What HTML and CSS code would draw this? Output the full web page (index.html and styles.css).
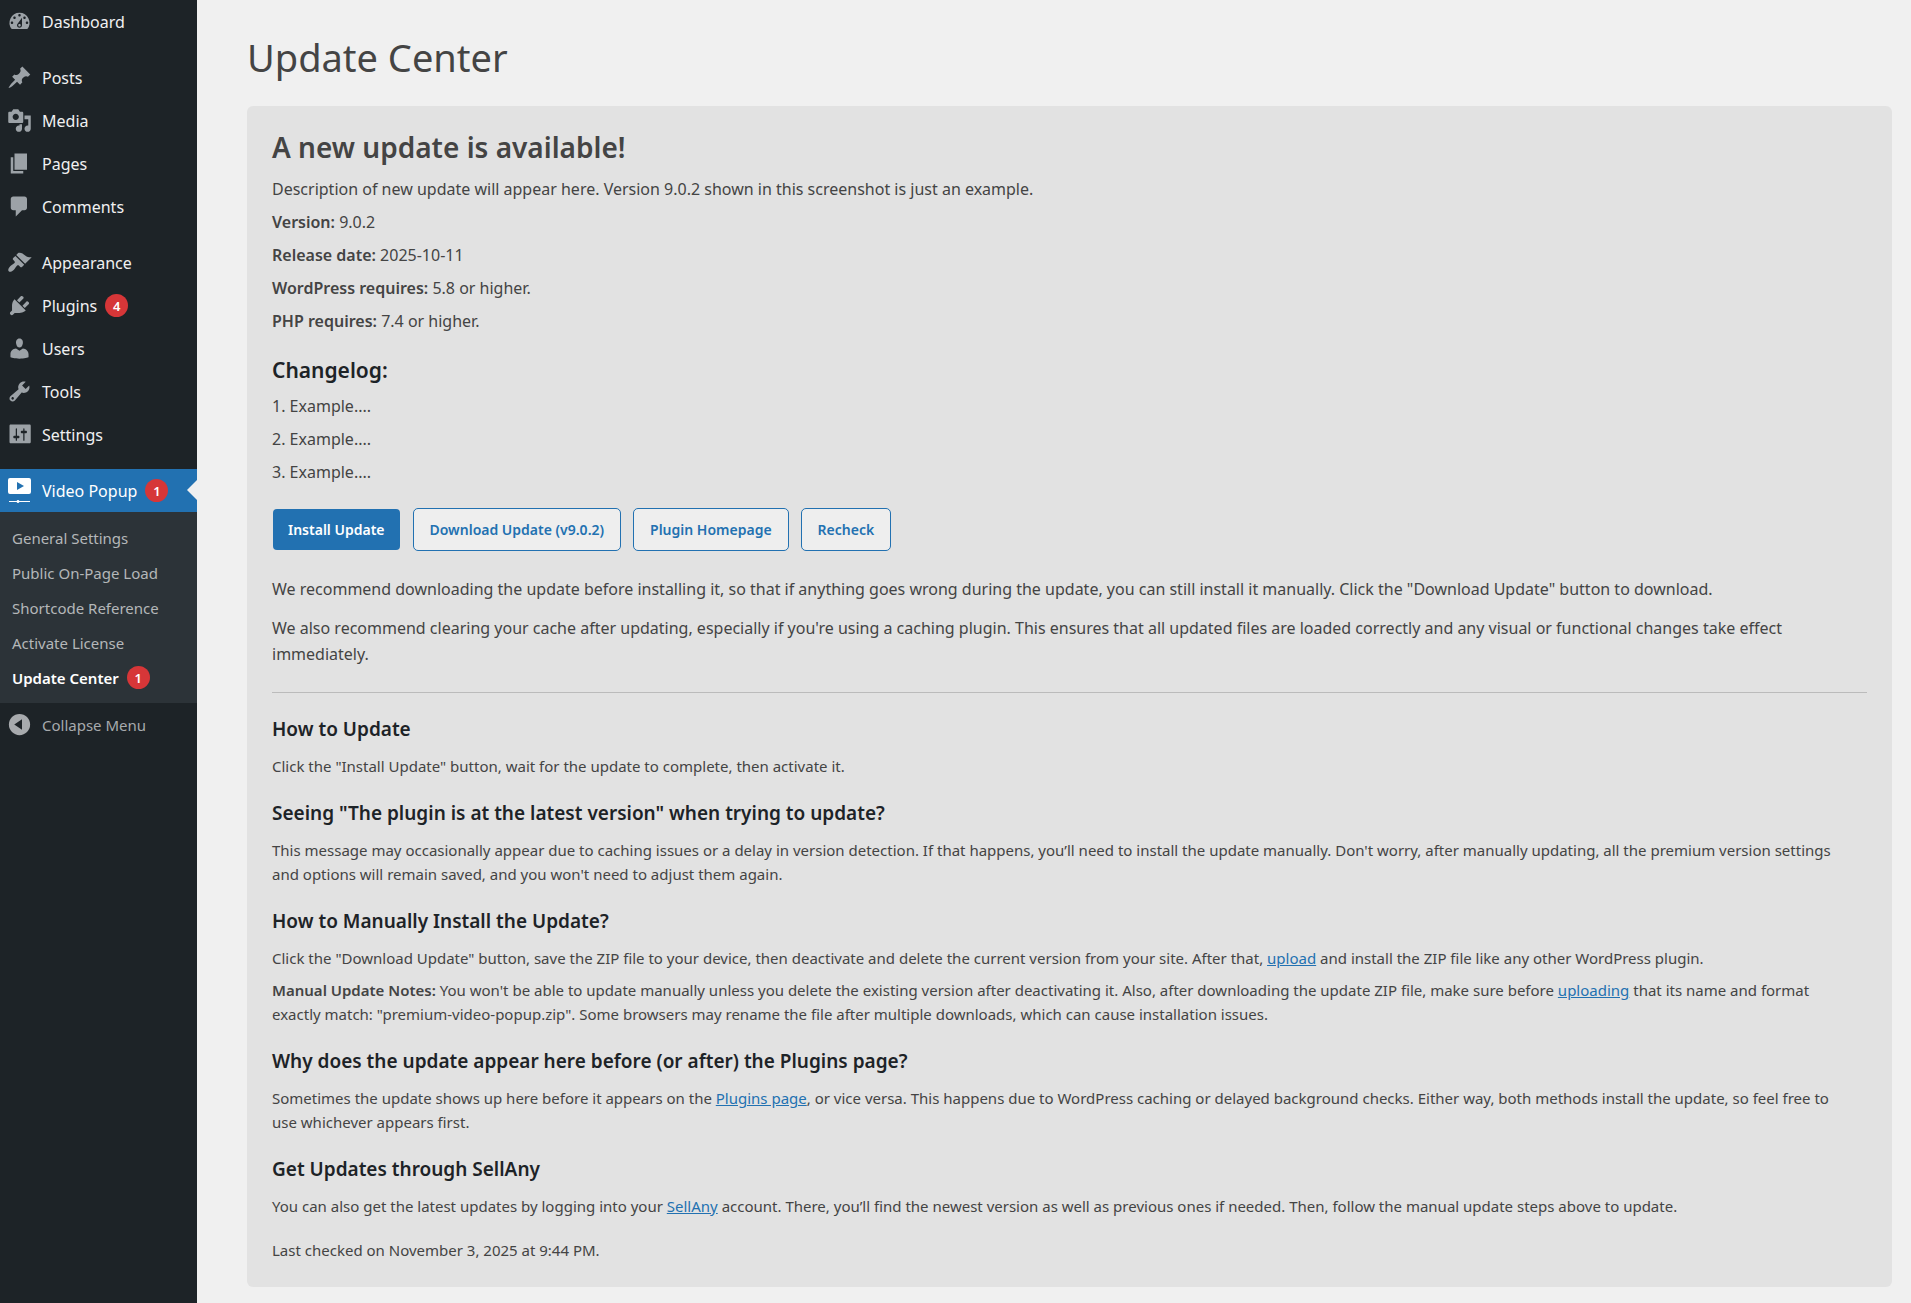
FILE: index.html
```
<!DOCTYPE html>
<html lang="en">
<head>
  <meta charset="UTF-8">
  <meta name="viewport" content="width=device-width, initial-scale=1.0">
  <title>Update Center</title>
  <link rel="stylesheet" href="styles.css">
</head>
<body>
  <div class="layout">
    <nav class="sidebar" aria-label="Main menu">
      <ul class="menu">
        <li>
          <a class="menu-link" href="#">
            <svg class="icon" viewBox="0 0 20 20"><path d="M3.76 16h12.48A7.998 7.998 0 0 0 10 3a7.998 7.998 0 0 0-6.24 13zM10 4c.55 0 1 .45 1 1s-.45 1-1 1-1-.45-1-1 .45-1 1-1zM6 6c.55 0 1 .45 1 1s-.45 1-1 1-1-.45-1-1 .45-1 1-1zm8 0c.55 0 1 .45 1 1s-.45 1-1 1-1-.45-1-1 .45-1 1-1zm-5.370 5.550L12 7v6c0 1.100-.9 2-2 2s-2-.9-2-2c0-.57.24-1.080.63-1.450zM4 10c.55 0 1 .45 1 1s-.45 1-1 1-1-.45-1-1 .45-1 1-1zm12 0c.55 0 1 .45 1 1s-.45 1-1 1-1-.45-1-1 .45-1 1-1zm-5 3c0-.55-.45-1-1-1s-1 .45-1 1 .45 1 1 1 1-.45 1-1z"/></svg>
            Dashboard
          </a>
        </li>
        <li class="group-start">
          <a class="menu-link" href="#">
            <svg class="icon" viewBox="0 0 20 20"><path d="M10.44 3.02l1.82-1.82 6.36 6.35-1.83 1.82c-1.05-.68-2.48-.57-3.41.36l-.75.75c-.92.93-1.04 2.35-.35 3.41l-1.83 1.82-2.41-2.41-2.8 2.79c-.42.42-3.38 2.71-3.8 2.29s1.86-3.39 2.28-3.81l2.79-2.79L4.1 9.36l1.83-1.82c1.05.69 2.48.57 3.4-.36l.75-.75c.93-.92 1.05-2.35.36-3.41z"/></svg>
            Posts
          </a>
        </li>
        <li>
          <a class="menu-link" href="#">
            <svg class="icon" viewBox="0 0 20 20"><path d="M13 11V4c0-.55-.45-1-1-1h-1.67L9 1H5L3.67 3H2c-.55 0-1 .45-1 1v7c0 .55.45 1 1 1h10c.55 0 1-.45 1-1zM7 4.5c1.38 0 2.5 1.12 2.5 2.5S8.38 9.5 7 9.5 4.5 8.38 4.5 7 5.62 4.5 7 4.5zM14 6h5v10.5c0 1.38-1.12 2.5-2.5 2.5S14 17.88 14 16.5s1.12-2.5 2.5-2.5c.17 0 .34.02.5.05V9h-3V6zm-4 8.05V13h2v3.5c0 1.38-1.12 2.5-2.5 2.5S7 17.88 7 16.5 8.12 14 9.5 14c.17 0 .34.02.5.05z"/></svg>
            Media
          </a>
        </li>
        <li>
          <a class="menu-link" href="#">
            <svg class="icon" viewBox="0 0 20 20"><path d="M6 15V2h10v13H6zm-1 1h8v2H3V5h2v11z"/></svg>
            Pages
          </a>
        </li>
        <li>
          <a class="menu-link" href="#">
            <svg class="icon" viewBox="0 0 20 20"><path d="M5 2h9c1.1 0 2 .9 2 2v7c0 1.1-.9 2-2 2h-2l-5 5v-5H5c-1.1 0-2-.9-2-2V4c0-1.1.9-2 2-2z"/></svg>
            Comments
          </a>
        </li>
        <li class="group-start">
          <a class="menu-link" href="#">
            <svg class="icon" viewBox="0 0 20 20"><path d="M14.48 11.06L7.41 3.99l1.5-1.5c.5-.56 2.3-.47 3.51.32 1.21.8 1.43 1.28 2.91 2.1 1.18.64 2.45 1.26 4.45.85zm-.71.71L6.7 4.7 4.93 6.47c-.39.39-.39 1.02 0 1.41l1.06 1.06c.39.39.39 1.03 0 1.42-.6.6-1.43 1.11-2.21 1.69-.35.26-.7.53-1.01.84C1.43 14.23.4 16.08 1.4 17.07c.99 1 2.84-.03 4.18-1.36.31-.31.58-.66.85-1.02.57-.78 1.08-1.61 1.69-2.21.39-.39 1.02-.39 1.41 0l1.06 1.06c.39.39 1.02.39 1.41 0z"/></svg>
            Appearance
          </a>
        </li>
        <li>
          <a class="menu-link" href="#">
            <svg class="icon" viewBox="0 0 20 20"><path d="M13.11 4.36L9.87 7.6 8 5.73l3.24-3.24c.35-.34 1.05-.2 1.56.32.52.51.66 1.21.31 1.55zm-8 1.77l.91-1.12 9.01 9.01-1.19.84c-.71.71-2.63 1.16-3.82 1.16H6.14L4.9 17.26c-.59.59-1.54.59-2.12 0-.59-.58-.59-1.53 0-2.12l1.24-1.24v-3.88c0-1.13.4-3.19 1.09-3.89zm7.26 3.97l3.24-3.24c.34-.35 1.04-.21 1.55.31.52.51.66 1.21.31 1.55l-3.24 3.25z"/></svg>
            Plugins
            <span class="badge">4</span>
          </a>
        </li>
        <li>
          <a class="menu-link" href="#">
            <svg class="icon" viewBox="0 0 20 20"><path d="M10 9.25c-2.27 0-2.73-3.44-2.73-3.44C7 4.02 7.82 2 9.97 2c2.16 0 2.98 2.02 2.71 3.81 0 0-.41 3.44-2.68 3.44zm0 2.57L12.72 10c2.39 0 4.52 2.33 4.52 4.53v2.49s-3.65 1.13-7.24 1.13c-3.65 0-7.24-1.13-7.24-1.13v-2.49c0-2.25 1.94-4.48 4.47-4.48z"/></svg>
            Users
          </a>
        </li>
        <li>
          <a class="menu-link" href="#">
            <svg class="icon" viewBox="0 0 20 20"><path d="M16.68 9.77c-1.34 1.34-3.3 1.67-4.95.99l-5.41 6.52c-.99.99-2.59.99-3.58 0s-.99-2.59 0-3.57l6.52-5.42c-.68-1.65-.35-3.61.99-4.95 1.28-1.28 3.12-1.62 4.72-1.06l-2.89 2.89 2.82 2.82 2.86-2.87c.53 1.58.18 3.39-1.08 4.65zM3.81 16.21c.4.39 1.04.39 1.43 0 .4-.4.4-1.04 0-1.43-.39-.4-1.03-.4-1.43 0-.39.39-.39 1.03 0 1.43z"/></svg>
            Tools
          </a>
        </li>
        <li>
          <a class="menu-link" href="#">
            <svg class="icon" viewBox="0 0 20 20"><path fill-rule="evenodd" d="M3 2h15c.55 0 1 .45 1 1v13c0 .55-.45 1-1 1H3c-.55 0-1-.45-1-1V3c0-.55.45-1 1-1zM8 11h1c.55 0 1 .45 1 1s-.45 1-1 1H8v1.500c0 .28-.22.5-.5.5s-.5-.22-.5-.5V13H6c-.55 0-1-.45-1-1s.45-1 1-1h1V5.500c0-.28.22-.5.5-.5s.5.22.5.5V11zm5-2h-1c-.55 0-1-.45-1-1s.45-1 1-1h1V5.500c0-.28.22-.5.5-.5s.5.22.5.5V7h1c.55 0 1 .45 1 1s-.45 1-1 1h-1v5.500c0 .28-.22.5-.5.5s-.5-.22-.5-.5V9z"/></svg>
            Settings
          </a>
        </li>
        <li class="group-start">
          <a class="menu-link current" href="#">
            <svg class="icon" viewBox="0 0 25 25"><path fill-rule="evenodd" d="M3 0h19a2 2 0 0 1 2 2v12a2 2 0 0 1-2 2H3a2 2 0 0 1-2-2V2a2 2 0 0 1 2-2zM10 4v8l7-4z"/><path d="M2 23h7.600a1.500 1.500 0 0 1 2.800 0H23v1H12.400a1.500 1.500 0 0 1-2.800 0H2z"/></svg>
            Video Popup
            <span class="badge">1</span>
          </a>
          <ul class="submenu">
            <li><a href="#">General Settings</a></li>
            <li><a href="#">Public On-Page Load</a></li>
            <li><a href="#">Shortcode Reference</a></li>
            <li><a href="#">Activate License</a></li>
            <li><a class="current-page" href="#">Update Center <span class="badge">1</span></a></li>
          </ul>
        </li>
        <li>
          <button class="menu-link collapse" type="button">
            <svg class="icon" viewBox="0 0 20 20"><path fill-rule="evenodd" d="M10 1.500a8.500 8.500 0 1 1 0 17 8.500 8.500 0 0 1 0-17zM12 5.800L5.800 10l6.200 4.200z"/></svg>
            Collapse Menu
          </button>
        </li>
      </ul>
    </nav>

    <main class="content">
      <h1 class="page-title">Update Center</h1>

      <div class="card">
        <section class="update">
          <h2 class="update-title">A new update is available!</h2>
          <p>Description of new update will appear here. Version 9.0.2 shown in this screenshot is just an example.</p>
          <p><strong>Version:</strong> 9.0.2</p>
          <p><strong>Release date:</strong> 2025-10-11</p>
          <p><strong>WordPress requires:</strong> 5.8 or higher.</p>
          <p><strong>PHP requires:</strong> 7.4 or higher.</p>

          <h3 class="changelog-title">Changelog:</h3>
          <p>1. Example....</p>
          <p>2. Example....</p>
          <p>3. Example....</p>
        </section>

        <div class="actions">
          <button class="btn btn-primary" type="button">Install Update</button>
          <button class="btn" type="button">Download Update (v9.0.2)</button>
          <button class="btn" type="button">Plugin Homepage</button>
          <button class="btn" type="button">Recheck</button>
        </div>

        <section class="notes">
          <p>We recommend downloading the update before installing it, so that if anything goes wrong during the update, you can still install it manually. Click the "Download Update" button to download.</p>
          <p>We also recommend clearing your cache after updating, especially if you're using a caching plugin. This ensures that all updated files are loaded correctly and any visual or functional changes take effect immediately.</p>
        </section>

        <hr class="divider">

        <section class="help">
          <h3>How to Update</h3>
          <p>Click the "Install Update" button, wait for the update to complete, then activate it.</p>

          <h3>Seeing "The plugin is at the latest version" when trying to update?</h3>
          <p>This message may occasionally appear due to caching issues or a delay in version detection. If that happens, you’ll need to install the update manually. Don't worry, after manually updating, all the premium version settings and options will remain saved, and you won't need to adjust them again.</p>

          <h3>How to Manually Install the Update?</h3>
          <p>Click the "Download Update" button, save the ZIP file to your device, then deactivate and delete the current version from your site. After that, <a href="#">upload</a> and install the ZIP file like any other WordPress plugin.</p>
          <p><strong>Manual Update Notes:</strong> You won't be able to update manually unless you delete the existing version after deactivating it. Also, after downloading the update ZIP file, make sure before <a href="#">uploading</a> that its name and format exactly match: "premium-video-popup.zip". Some browsers may rename the file after multiple downloads, which can cause installation issues.</p>

          <h3>Why does the update appear here before (or after) the Plugins page?</h3>
          <p>Sometimes the update shows up here before it appears on the <a href="#">Plugins page</a>, or vice versa. This happens due to WordPress caching or delayed background checks. Either way, both methods install the update, so feel free to use whichever appears first.</p>

          <h3>Get Updates through SellAny</h3>
          <p>You can also get the latest updates by logging into your <a href="#">SellAny</a> account. There, you’ll find the newest version as well as previous ones if needed. Then, follow the manual update steps above to update.</p>
          <p class="last-checked">Last checked on November 3, 2025 at 9:44 PM.</p>
        </section>
      </div>
    </main>
  </div>
</body>
</html>
```

FILE: styles.css
```
* {
  box-sizing: border-box;
}
body {
  margin: 0;
  background-color: #f0f0f0;
  color: #444444;
  font-family: "Segoe UI", "Noto Sans", "Open Sans", sans-serif;
  font-size: 16px;
  line-height: 26px;
}
h1, h2, h3, p, ul {
  margin: 0;
}
ul {
  padding: 0;
  list-style: none;
}
strong {
  font-weight: 600;
}
.layout {
  display: flex;
  min-height: 100vh;
}

/* Sidebar */
.sidebar {
  flex: 0 0 197px;
  background-color: #1d2327;
}
.group-start {
  margin-top: 13px;
}
.menu-link {
  position: relative;
  display: flex;
  align-items: center;
  width: 100%;
  height: 43px;
  padding-left: 7px;
  color: #f0f0f1;
  font-size: 16px;
  text-decoration: none;
}
.icon {
  flex: none;
  width: 25px;
  height: 25px;
  margin-right: 10px;
  fill: #9ca2a7;
}
.badge {
  display: inline-flex;
  align-items: center;
  justify-content: center;
  width: 23px;
  height: 23px;
  margin-left: 8px;
  border-radius: 50%;
  background-color: #d63638;
  color: #ffffff;
  font-size: 13px;
  font-weight: 600;
}
.current {
  background-color: #2271b1;
  color: #ffffff;
}
.current .icon {
  fill: #ffffff;
}
.current::after {
  content: "";
  position: absolute;
  top: 11px;
  right: 0;
  border: 10px solid transparent;
  border-left-width: 0;
  border-right-color: #f0f0f0;
}
.submenu {
  padding: 8px 0;
  background-color: #2c3338;
}
.submenu a {
  display: flex;
  align-items: center;
  height: 35px;
  padding-left: 12px;
  color: #b4b7b9;
  font-size: 15px;
  text-decoration: none;
}
.submenu .current-page {
  color: #ffffff;
  font-weight: 600;
}
.collapse {
  border: 0;
  background: none;
  color: #a7aaad;
  font-family: inherit;
  font-size: 15px;
}
.collapse .icon {
  fill: #a7aaad;
}

/* Content */
.content {
  flex: 1;
  padding: 32px 19px 16px 50px;
}
.page-title {
  margin-bottom: 24px;
  font-size: 38px;
  font-weight: 400;
  line-height: 50px;
}
.card {
  padding: 25px;
  border-radius: 6px;
  background-color: #e2e2e2;
}
.update-title {
  margin-bottom: 13px;
  font-size: 28px;
  font-weight: 600;
  line-height: 32px;
}
.update p + p {
  margin-top: 7px;
}
.changelog-title {
  margin: 22px 0 9px;
  color: #1d2327;
  font-size: 21px;
  font-weight: 600;
  line-height: 28px;
}
.actions {
  display: flex;
  flex-wrap: wrap;
  gap: 12px;
  margin: 23px 0 25px;
}
.btn {
  height: 43px;
  padding: 0 16px;
  border: 1px solid #2271b1;
  border-radius: 5px;
  background-color: #eeeeee;
  color: #2271b1;
  font-family: inherit;
  font-size: 14px;
  font-weight: 600;
}
.btn-primary {
  padding: 0 15px;
  border-color: transparent;
  background-color: #2271b1;
  background-clip: padding-box;
  color: #ffffff;
}
.notes p + p {
  margin-top: 13px;
}
.divider {
  margin: 25px 0 23px;
  border: 0;
  border-top: 1px solid #bbbbbb;
}
.help {
  font-size: 15px;
  line-height: 24px;
}
.help h3 {
  margin-bottom: 12px;
  color: #1d2327;
  font-size: 19px;
  font-weight: 600;
  line-height: 26px;
}
.help p {
  padding-right: 12px;
}
.help p + h3 {
  margin-top: 22px;
}
.help p + p {
  margin-top: 8px;
}
.help .last-checked {
  margin-top: 20px;
}
.help a {
  color: #2271b1;
}
```
